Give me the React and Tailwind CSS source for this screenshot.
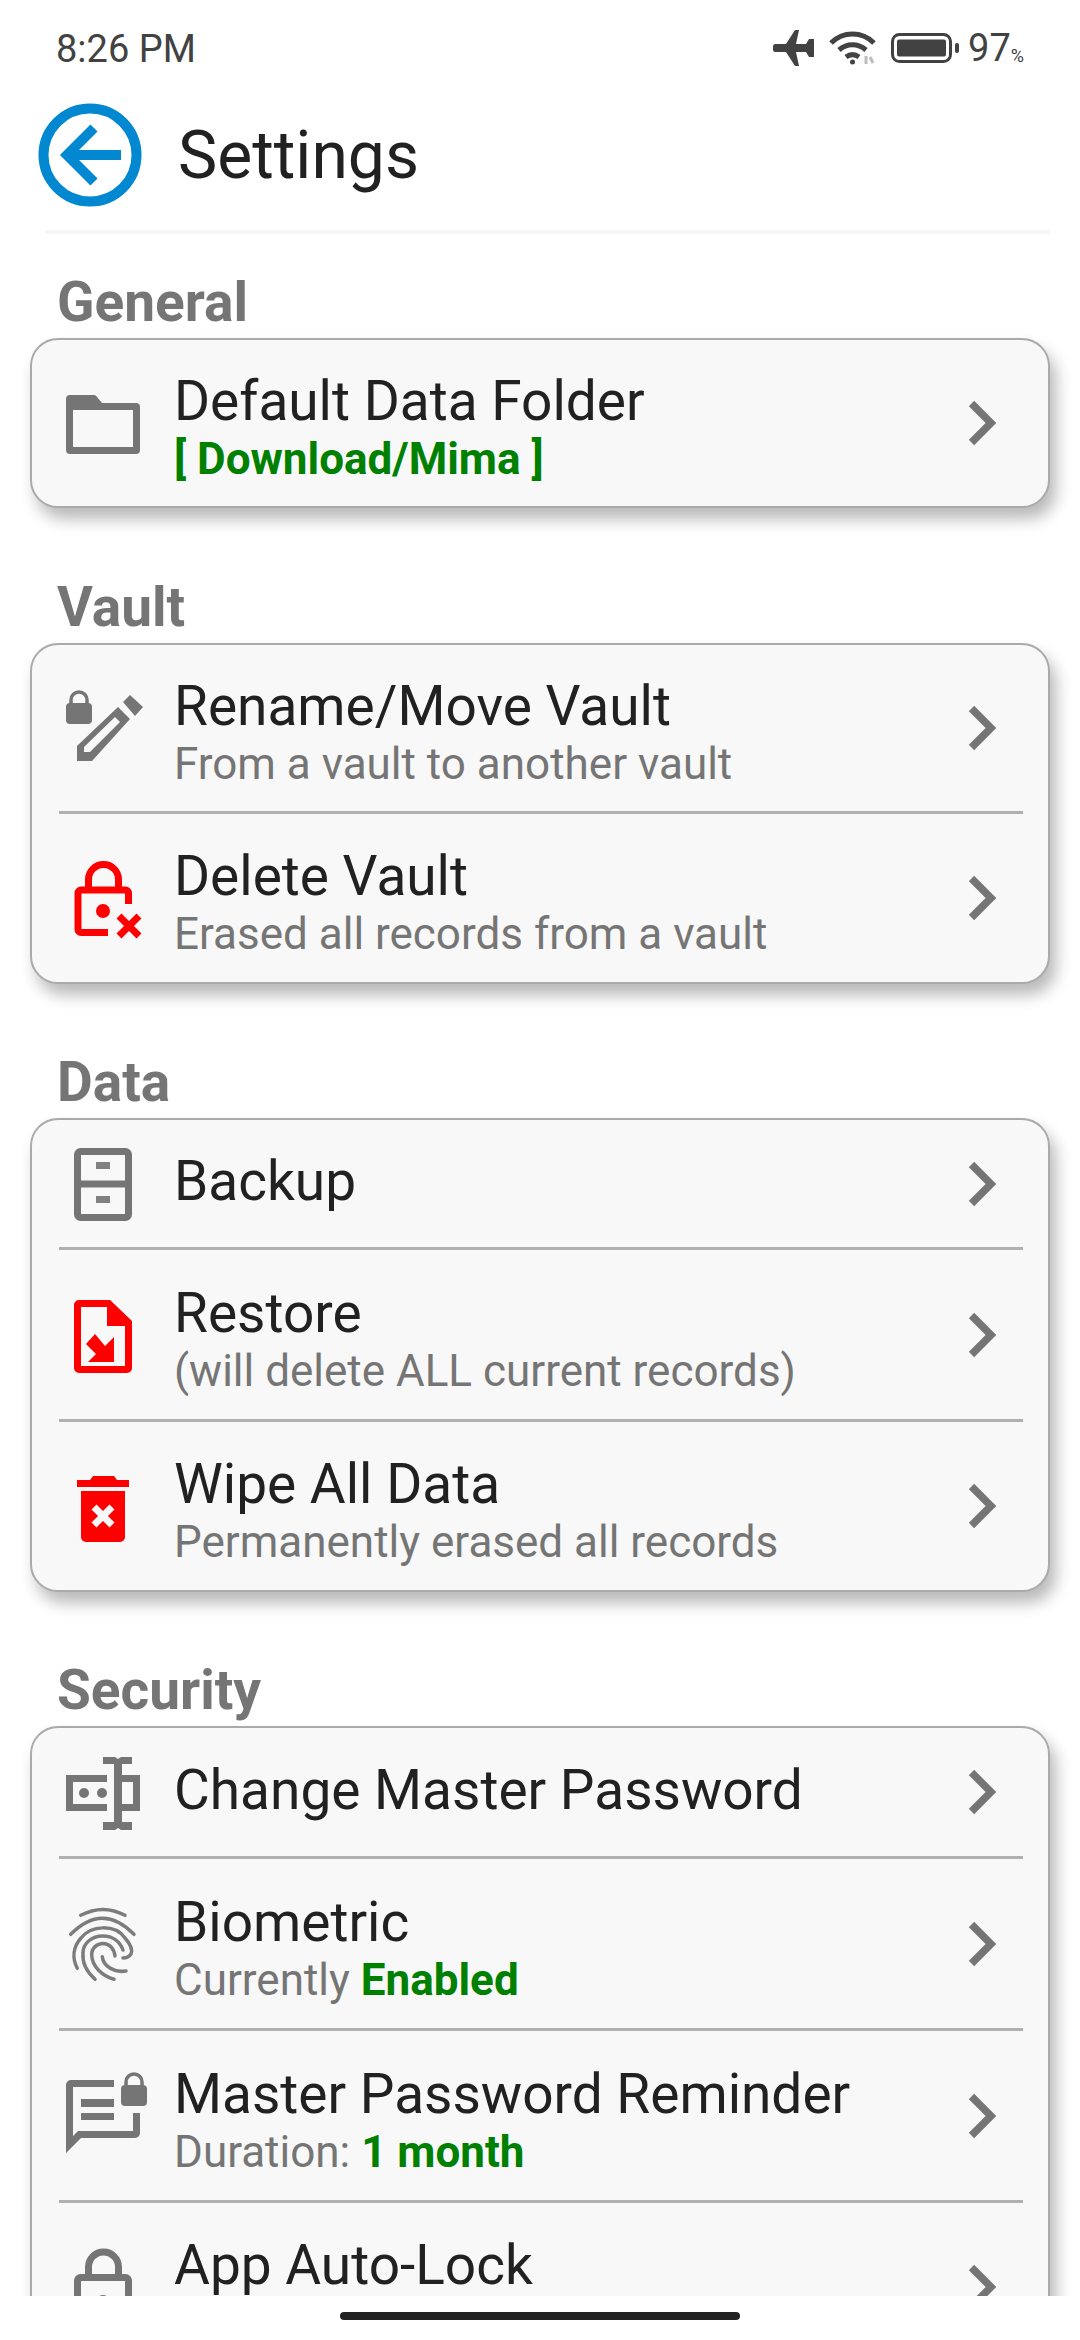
const G = "#757575";
const R = "#ff0000";

function Svg({ children }) {
  return <svg width="88" height="88" viewBox="0 0 88 88" className="shrink-0 overflow-visible">{children}</svg>;
}
const Folder = () => (
  <Svg>
    <path d="M11 16h24a3 3 0 0 1 2.2 1L43 24h34a4 4 0 0 1 4 4v43a4 4 0 0 1-4 4H11a4 4 0 0 1-4-4V20a4 4 0 0 1 4-4z M14 31v37h60V31z" fill={G} fillRule="evenodd" />
  </Svg>
);
const SmallLock = ({ x, y }) => (
  <g transform={`translate(${x} ${y})`}>
    <path d="M5 13V9a8 8 0 0 1 16 0v4" fill="none" stroke={G} strokeWidth="3.5" />
    <rect x="0" y="12" width="26" height="21" rx="4" fill={G} />
  </g>
);
const RenameIcon = () => (
  <Svg>
    <SmallLock x={7} y={7} />
    <path d="M71 11l13 12-8 9-12-14z" fill={G} />
    <path d="M59 23l12 12-38 42H18V62z M56 33L25 63v5h6l30-30z" fill={G} fillRule="evenodd" />
  </Svg>
);
const DeleteLock = () => (
  <Svg>
    <path d="M29.5 36V25.5a15 15 0 0 1 30 0V36" fill="none" stroke={R} strokeWidth="7" />
    <path d="M69.5 50V39a3 3 0 0 0-3-3H22a3 3 0 0 0-3 3v36.5a3 3 0 0 0 3 3h27" fill="none" stroke={R} strokeWidth="7" />
    <circle cx="44" cy="57" r="7" fill={R} />
    <path d="M60 62l20 20M80 62L60 82" stroke={R} strokeWidth="7" />
  </Svg>
);
const Backup = () => (
  <Svg>
    <rect x="18.5" y="11.5" width="51" height="66" rx="3" fill="none" stroke={G} strokeWidth="7" />
    <path d="M18 44h52" stroke={G} strokeWidth="7" />
    <rect x="37" y="22" width="14" height="7" fill="#808080" />
    <rect x="37" y="56" width="14" height="7" fill="#808080" />
  </Svg>
);
const Restore = () => (
  <Svg>
    <path d="M20 9h31l22 21v47a5 5 0 0 1-5 5H20a5 5 0 0 1-5-5V14a5 5 0 0 1 5-5z M22 16v59h44V35H48V16z" fill={R} fillRule="evenodd" />
    <path d="M55 46v25H29l8-8-10-10 9-10 10 12z" fill={R} />
  </Svg>
);
const Wipe = () => (
  <Svg>
    <path d="M18 18h13l3-4h21l3 4h12v7H18z" fill={R} />
    <path d="M22 29h44v46a5 5 0 0 1-5 5H27a5 5 0 0 1-5-5z" fill={R} />
    <path d="M35 45l18 18M53 45L35 63" stroke="#f8f8f8" strokeWidth="7" />
  </Svg>
);
const ChangePw = () => (
  <Svg>
    <path d="M48 30.5H10.5v29H48" fill="none" stroke={G} strokeWidth="7" />
    <path d="M63 30.5h14.5v29H63" fill="none" stroke={G} strokeWidth="7" />
    <circle cx="25" cy="45" r="5" fill={G} />
    <circle cx="43" cy="45" r="5" fill={G} />
    <path d="M44 9h12l3 2 3-2h11v7H63v58h10v8H62l-3-2-3 2H44v-8h11V16H44z" fill={G} />
  </Svg>
);
const Fingerprint = () => (
  <Svg>
    <g fill="none" stroke="#7c7c7c" strokeWidth="3.5" strokeLinecap="round">
      <path d="M21.7 15.3Q44 3.5 66 15.3" />
      <path d="M11.7 34.3Q43.5 2 75 34.3" />
      <path d="M18.3 68.3C13 58 14 47 22 38C32 25 56 24 66 38C72 45 74 50 72 54C70 57 67 58 64 58" />
      <path d="M36 79.3C28 72 23 63 24 53C24 43 33 36 44 36C54 36 61 42 64 50" />
      <path d="M55 79.3C44 76 33 67 32.7 55C32.5 48 38 43.5 44 43.5C50 43.5 55 48 56 56" />
      <path d="M67 71C55 73 44 66 43.3 56.7" />
    </g>
  </Svg>
);
const Reminder = () => (
  <Svg>
    <path d="M55 8H12a5 5 0 0 0-5 5v68l15-15h54a5 5 0 0 0 5-5V41h-7v18H19l-5 5V15h41z" fill={G} />
    <rect x="22" y="27" width="33" height="8" fill={G} />
    <rect x="22" y="41" width="33" height="7" fill={G} />
    <SmallLock x={62} y={1} />
  </Svg>
);
const AutoLock = () => (
  <Svg>
    <path d="M29.5 33V24a15 15 0 0 1 30 0v9" fill="none" stroke={G} strokeWidth="7" />
    <rect x="18.5" y="34.5" width="51" height="46" rx="3" fill="none" stroke={G} strokeWidth="7" />
    <circle cx="44" cy="59" r="7" fill={G} />
  </Svg>
);
const Chevron = () => (
  <svg width="28" height="46" viewBox="0 0 28 46" className="shrink-0">
    <path d="M3.5 3.5L23 23 3.5 42.5" fill="none" stroke={G} strokeWidth="7.5" />
  </svg>
);

function Row({ icon, title, sub, h, divider }) {
  return (
    <div className={`flex items-center ml-[27px] mr-[25px] ${h} ${divider ? "border-b-[3px] border-[#b0b0b0]" : ""}`}>
      <div className="w-[115px] shrink-0">{icon}</div>
      <div className={`flex-1 min-w-0 ${sub ? "pt-[12px]" : "pb-[5px]"}`}>
        <div className="text-[55px] leading-[60px] text-[#212121] whitespace-nowrap">{title}</div>
        {sub && <div className="text-[44px] leading-[56px] text-[#757575] whitespace-nowrap">{sub}</div>}
      </div>
      <div className="mr-[27px] flex"><Chevron /></div>
    </div>
  );
}
function Card({ children }) {
  return (
    <div className="mx-[30px] rounded-[28px] border-2 border-[#aaaaaa] bg-[#f8f8f8] shadow-[6px_11px_16px_rgba(0,0,0,0.28)]">
      {children}
    </div>
  );
}
function Label({ children, mt }) {
  return (
    <div className={`${mt} h-[64px] pl-[57px] text-[55px] leading-[56px] font-bold text-[#757575]`}>
      {children}
    </div>
  );
}
const Green = ({ children }) => <span className="font-bold text-[#008000]">{children}</span>;

export default function App() {
  return (
    <div className="w-[1080px] h-[2340px] bg-white overflow-hidden flex flex-col font-['Roboto',sans-serif]">
      <div className="flex-1 min-h-0 overflow-hidden">
        <div className="h-[96px] flex items-center justify-between pl-[56px] pr-[56px] text-[#424242]">
          <span className="text-[38px] leading-none pt-[2px]">8:26 PM</span>
          <div className="flex items-center">
            <svg width="42" height="36" viewBox="0 0 42 36" className="mr-[14px]" fill="#424242">
              <path d="M0 16.5a2.5 2.5 0 0 1 2.5-2.5H13L22 0h4l-3 14h10l3-5h5v18h-5l-3-5H23l3 14h-4L13 22H2.5A2.5 2.5 0 0 1 0 19.5z" />
            </svg>
            <svg width="48" height="36" viewBox="0 0 48 36" className="mr-[14px]" fill="none" stroke="#424242" strokeWidth="5">
              <path d="M2 13C14 1 33 1 45 13" />
              <path d="M10 20c8-7 19-7 27 0" />
              <path d="M17 27c4-3 9-3 13 0" />
              <circle cx="23.5" cy="32" r="2.5" fill="#424242" stroke="none" />
              <path d="M37 26v8M41 27l3 6" stroke="#bdbdbd" strokeWidth="3" />
            </svg>
            <svg width="68" height="30" viewBox="0 0 68 30" className="mr-[9px]">
              <rect x="1.5" y="1.5" width="58" height="27" rx="7" fill="none" stroke="#424242" strokeWidth="3" />
              <rect x="6" y="6.5" width="49" height="17" rx="2" fill="#424242" />
              <rect x="64" y="10" width="4" height="10" rx="2" fill="#424242" />
            </svg>
            <span className="text-[38px] leading-none">97</span>
            <span className="text-[18px] leading-none self-end mb-[2px]">%</span>
          </div>
        </div>
        <div className="h-[118px] flex items-center pl-[38px]">
          <svg width="104" height="104" viewBox="0 0 104 104" className="mr-[36px]">
            <circle cx="52" cy="52" r="46.5" fill="none" stroke="#0288d1" strokeWidth="10" />
            <path d="M83 52H29M56 25L29 52 56 79" fill="none" stroke="#0288d1" strokeWidth="10" />
          </svg>
          <span className="text-[66px] leading-none text-[#212121] pt-[2px]">Settings</span>
        </div>
        <div className="h-[4px] mt-[16px] ml-[45px] mr-[30px] bg-[#f7f7f7]" />

        <Label mt="mt-[40px]">General</Label>
        <Card>
          <Row h="h-[166px]" icon={<Folder />} title="Default Data Folder" sub={<Green>[ Download/Mima ]</Green>} />
        </Card>

        <Label mt="mt-[71px]">Vault</Label>
        <Card>
          <Row h="h-[169px]" divider icon={<RenameIcon />} title="Rename/Move Vault" sub="From a vault to another vault" />
          <Row h="h-[168px]" icon={<DeleteLock />} title="Delete Vault" sub="Erased all records from a vault" />
        </Card>

        <Label mt="mt-[70px]">Data</Label>
        <Card>
          <Row h="h-[130px]" divider icon={<Backup />} title="Backup" />
          <Row h="h-[172px]" divider icon={<Restore />} title="Restore" sub="(will delete ALL current records)" />
          <Row h="h-[168px]" icon={<Wipe />} title="Wipe All Data" sub="Permanently erased all records" />
        </Card>

        <Label mt="mt-[70px]">Security</Label>
        <Card>
          <Row h="h-[131px]" divider icon={<ChangePw />} title="Change Master Password" />
          <Row h="h-[172px]" divider icon={<Fingerprint />} title="Biometric" sub={<>Currently <Green>Enabled</Green></>} />
          <Row h="h-[172px]" divider icon={<Reminder />} title="Master Password Reminder" sub={<>Duration: <Green>1 month</Green></>} />
          <Row h="h-[167px]" icon={<AutoLock />} title="App Auto-Lock" sub={"\u00a0"} />
        </Card>
      </div>
      <div className="h-[44px] shrink-0 flex justify-center pt-[16px]">
        <div className="w-[400px] h-[8px] rounded-full bg-[#212121]" />
      </div>
    </div>
  );
}
